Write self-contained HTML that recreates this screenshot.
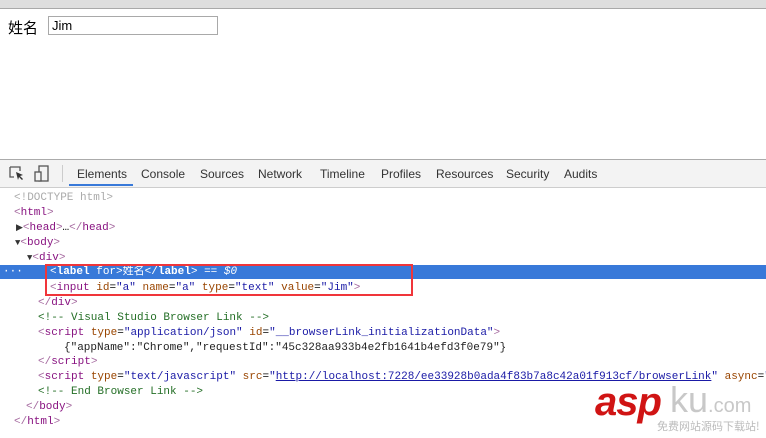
<!DOCTYPE html>
<html><head><meta charset="utf-8"><style>
body{margin:0;width:766px;height:438px;overflow:hidden;background:#fff;position:relative;font-family:"Liberation Sans","Noto Sans CJK SC",sans-serif}
.top{position:absolute;left:0;top:0;width:766px;height:8px;background:#dedede;border-bottom:1px solid #a9a9a9}
.lbl{position:absolute;left:8px;top:17px;font-size:15px;color:#000}
.inp{position:absolute;left:48px;top:16px;width:170px;height:19px;border:1px solid #a9a9a9;box-sizing:border-box;font-size:13px;padding:1px 3px;line-height:16px}
.bar{position:absolute;left:0;top:159px;width:766px;height:27px;background:#f3f3f3;border-top:1px solid #ababab;border-bottom:1px solid #cdcdcd}
.tab{position:absolute;top:7px;font-size:12px;color:#333;font-family:"Liberation Sans",sans-serif}
.code{position:absolute;left:0;font-family:"Liberation Mono",monospace;font-size:11px;white-space:pre;line-height:15px;height:15px;width:766px}
.t{color:#881280}.b{color:#a5699f}.a{color:#994500}.v{color:#1a1aa6}.c{color:#236e25}.g{color:#aaa}
.hl{background:#3879d9;color:#fff}
.hl .t,.hl .b,.hl .a,.hl .v{color:#fff}
a{color:#1a1aa6;text-decoration:underline}
.wm{position:absolute;white-space:nowrap}
</style></head><body>
<div class="top"></div>
<div class="lbl">姓名</div>
<div class="inp">Jim</div>
<div class="bar">
<svg style="position:absolute;left:9px;top:6px" width="16" height="16" viewBox="0 0 16 16"><path d="M1 1h10v4M1 1v10h4" fill="none" stroke="#555" stroke-width="1.3"/><path d="M7 6l7 3-3 1 3 3-1 1-3-3-1 3z" fill="#333"/></svg>
<svg style="position:absolute;left:34px;top:5px" width="16" height="18" viewBox="0 0 16 18"><rect x="5" y="1" width="9" height="15" fill="none" stroke="#555" stroke-width="1.3"/><rect x="1" y="7" width="6" height="9" fill="#f3f3f3" stroke="#555" stroke-width="1.3"/></svg>
<div style="position:absolute;left:62px;top:5px;width:1px;height:17px;background:#ccc"></div>
<span class="tab" style="left:77px;color:#333">Elements</span>
<div style="position:absolute;left:69px;top:24px;width:64px;height:2px;background:#3879d9"></div>
<span class="tab" style="left:141px">Console</span>
<span class="tab" style="left:200px">Sources</span>
<span class="tab" style="left:258px">Network</span>
<span class="tab" style="left:320px">Timeline</span>
<span class="tab" style="left:381px">Profiles</span>
<span class="tab" style="left:436px">Resources</span>
<span class="tab" style="left:506px">Security</span>
<span class="tab" style="left:564px">Audits</span>
</div>
<div class="code" style="top:191px;padding-left:14px"><span class="g">&lt;!DOCTYPE html&gt;</span></div>
<div class="code" style="top:206px;padding-left:14px"><span class="b">&lt;</span><span class="t">html</span><span class="b">&gt;</span></div>
<div class="code" style="top:221px;padding-left:16px"><span style="color:#333;font-size:9px">▶</span><span class="b">&lt;</span><span class="t">head</span><span class="b">&gt;</span>…<span class="b">&lt;/</span><span class="t">head</span><span class="b">&gt;</span></div>
<div class="code" style="top:236px;padding-left:15px"><span style="color:#333;font-size:9px">▼</span><span class="b">&lt;</span><span class="t">body</span><span class="b">&gt;</span></div>
<div class="code" style="top:251px;padding-left:27px"><span style="color:#333;font-size:9px">▼</span><span class="b">&lt;</span><span class="t">div</span><span class="b">&gt;</span></div>
<div class="code hl" style="top:265px;padding-left:50px;height:14px;line-height:14px"><span style="position:absolute;left:3px">···</span><span class="b">&lt;</span><span class="t" style="font-weight:bold">label</span> <span class="a">for</span><span class="b">&gt;</span>姓名<span class="b">&lt;/</span><span class="t" style="font-weight:bold">label</span><span class="b">&gt;</span> == <i>$0</i></div>
<div class="code" style="top:281px;padding-left:50px"><span class="b">&lt;</span><span class="t">input</span> <span class="a">id</span>=<span class="v">"a"</span> <span class="a">name</span>=<span class="v">"a"</span> <span class="a">type</span>=<span class="v">"text"</span> <span class="a">value</span>=<span class="v">"Jim"</span><span class="b">&gt;</span></div>
<div style="position:absolute;left:45px;top:264px;width:364px;height:28px;border:2px solid #f0353a"></div>
<div class="code" style="top:296px;padding-left:38px"><span class="b">&lt;/</span><span class="t">div</span><span class="b">&gt;</span></div>
<div class="code" style="top:311px;padding-left:38px"><span class="c">&lt;!-- Visual Studio Browser Link --&gt;</span></div>
<div class="code" style="top:326px;padding-left:38px"><span class="b">&lt;</span><span class="t">script</span> <span class="a">type</span>=<span class="v">"application/json"</span> <span class="a">id</span>=<span class="v">"__browserLink_initializationData"</span><span class="b">&gt;</span></div>
<div class="code" style="top:341px;padding-left:64px;color:#222">{"appName":"Chrome","requestId":"45c328aa933b4e2fb1641b4efd3f0e79"}</div>
<div class="code" style="top:355px;padding-left:38px"><span class="b">&lt;/</span><span class="t">script</span><span class="b">&gt;</span></div>
<div class="code" style="top:370px;padding-left:38px"><span class="b">&lt;</span><span class="t">script</span> <span class="a">type</span>=<span class="v">"text/javascript"</span> <span class="a">src</span>=<span class="v">"</span><a>http://localhost:7228/ee33928b0ada4f83b7a8c42a01f913cf/browserLink</a><span class="v">"</span> <span class="a">async</span>=<span class="v">"</span></div>
<div class="code" style="top:385px;padding-left:38px"><span class="c">&lt;!-- End Browser Link --&gt;</span></div>
<div class="code" style="top:400px;padding-left:26px"><span class="b">&lt;/</span><span class="t">body</span><span class="b">&gt;</span></div>
<div class="code" style="top:415px;padding-left:14px"><span class="b">&lt;/</span><span class="t">html</span><span class="b">&gt;</span></div>
<div class="wm" style="left:595px;top:382px;font:italic bold 40px 'Liberation Sans',sans-serif;color:#d01414;letter-spacing:-1px;line-height:40px">asp</div>
<div class="wm" style="left:670px;top:382px;font:36px 'Liberation Sans',sans-serif;color:#c8c8c8;line-height:36px">ku<span style="font-size:20px">.com</span></div>
<div class="wm" style="left:657px;top:420px;font:11px 'Noto Sans CJK SC',sans-serif;color:#bbb;line-height:13px">免费网站源码下载站!</div>
</body></html>
